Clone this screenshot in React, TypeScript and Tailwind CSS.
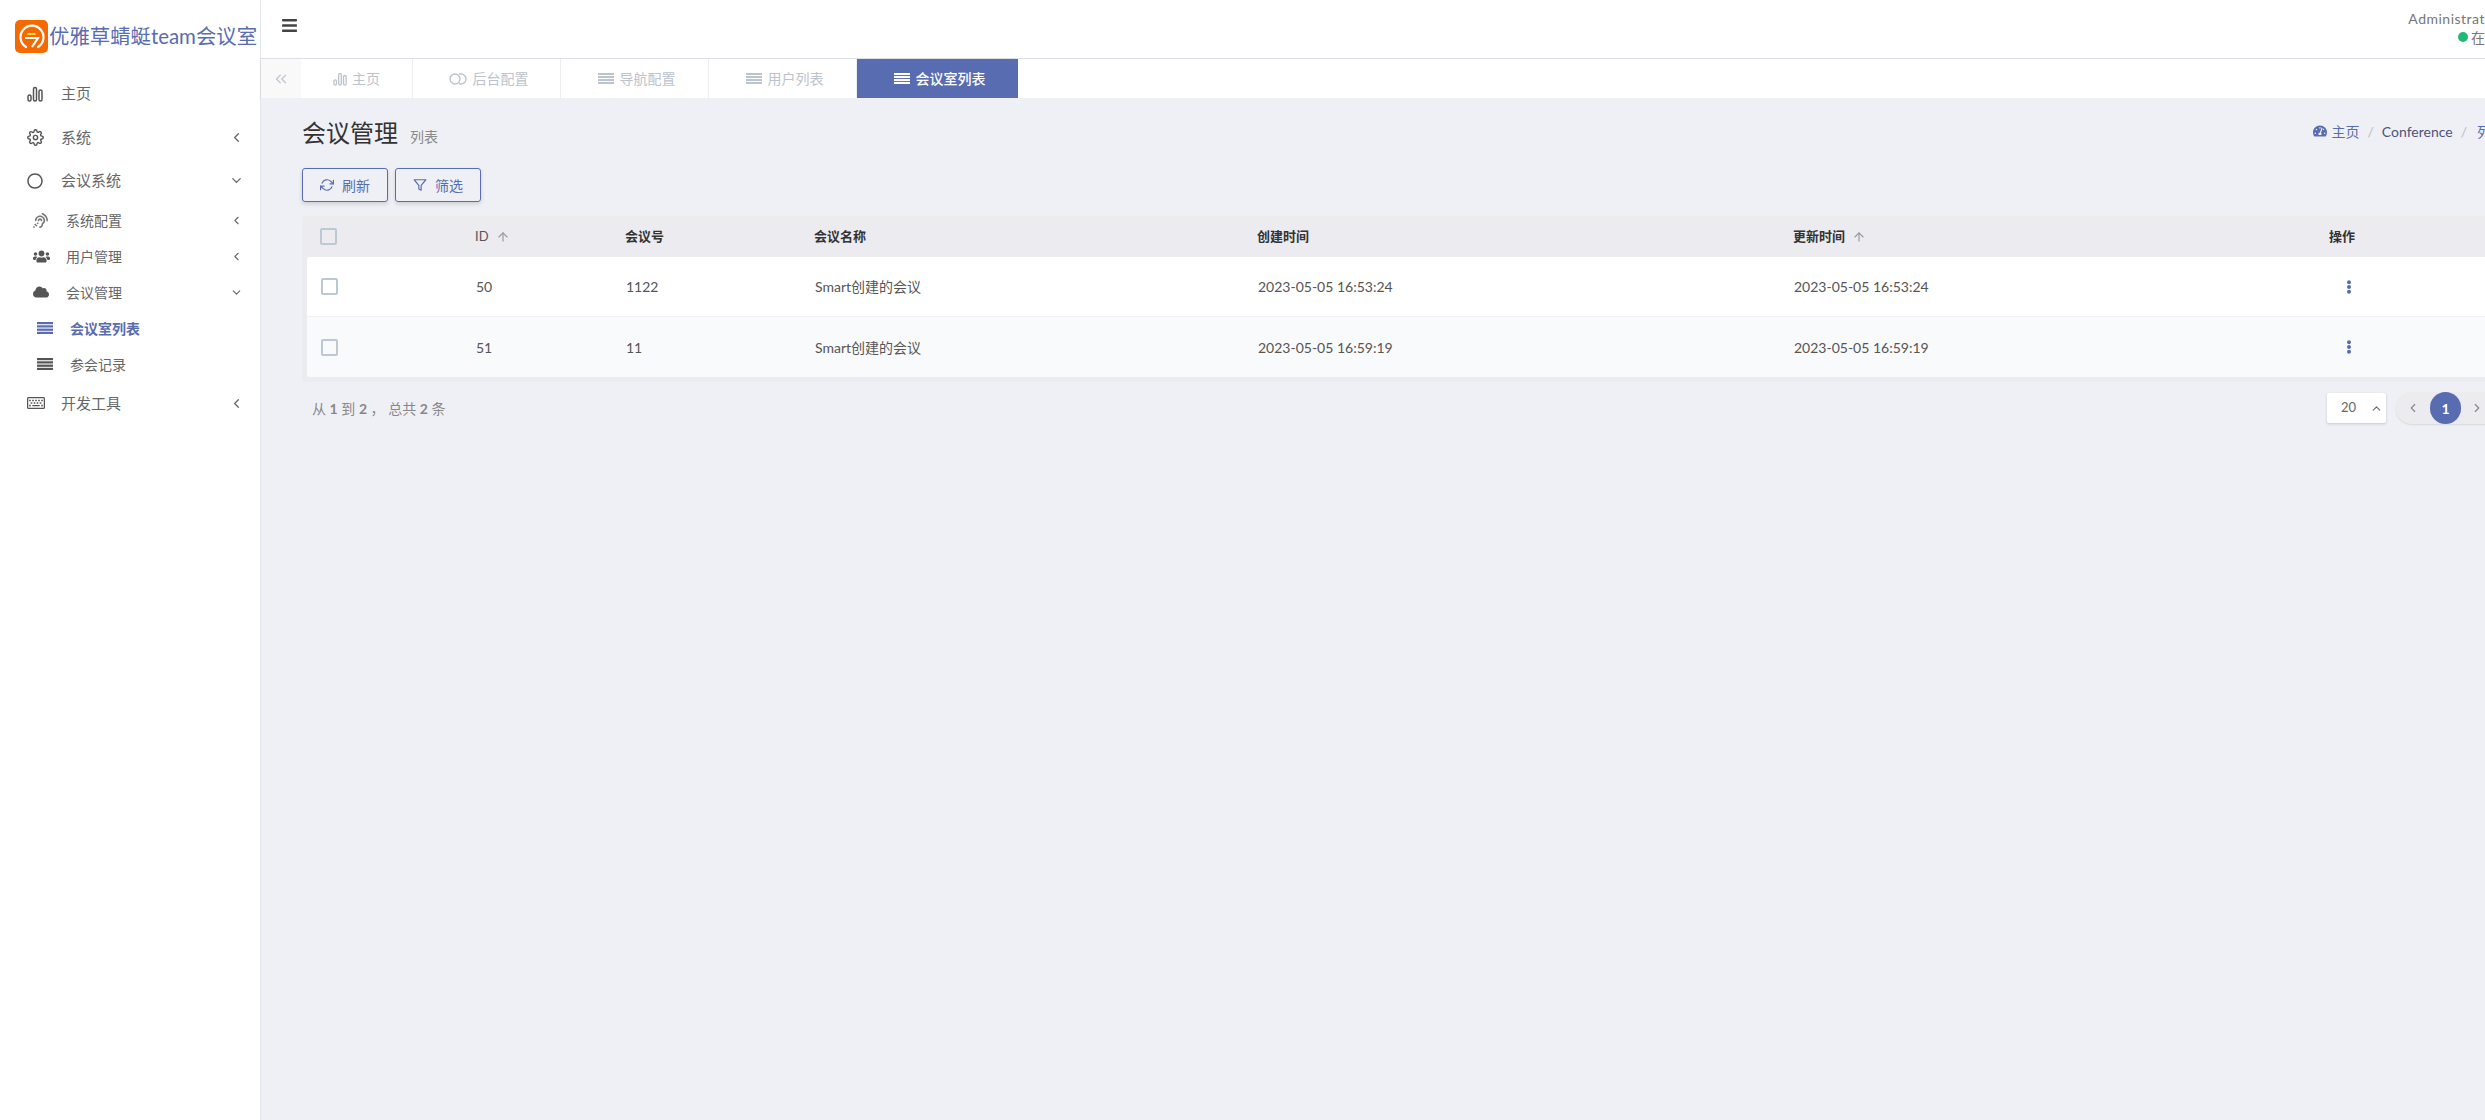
import {
  FaAssistiveListeningSystems,
  FaBars,
  FaCloud,
  FaEllipsisV,
  FaRegCircle,
  FaRegKeyboard,
  FaTachometerAlt,
  FaUsers,
} from "react-icons/fa";
import {
  FiArrowUp,
  FiChevronDown,
  FiChevronLeft,
  FiChevronRight,
  FiChevronUp,
  FiChevronsLeft,
  FiFilter,
  FiRefreshCw,
  FiSettings,
} from "react-icons/fi";

const FONT = "font-['Lato','Noto_Sans_CJK_SC',sans-serif]";

const BarsIcon = ({ className }: { className?: string }) => (
  <svg viewBox="0 0 16 16" fill="none" stroke="currentColor" strokeWidth="1.5" className={className}>
    <rect x="1" y="9" width="3" height="6" rx="1.5" />
    <rect x="6.5" y="1.5" width="3" height="13.5" rx="1.5" />
    <rect x="12" y="4" width="3" height="11" rx="1.5" />
  </svg>
);

const LinkIcon = ({ className }: { className?: string }) => (
  <svg viewBox="0 0 18 12" fill="none" stroke="currentColor" strokeWidth="1.4" className={className}>
    <circle cx="6" cy="6" r="5" />
    <path d="M10 1h2a5 5 0 0 1 0 10h-2" />
  </svg>
);

const ListIcon = ({ className }: { className?: string }) => (
  <svg viewBox="0 0 15 12" fill="currentColor" preserveAspectRatio="none" className={className}>
    <rect y="0" width="15" height="2.2" />
    <rect y="3.3" width="15" height="2.2" />
    <rect y="6.6" width="15" height="2.2" />
    <rect y="9.8" width="15" height="2.2" />
  </svg>
);

const Logo = () => (
  <svg viewBox="0 0 33 33" className="h-[33px] w-[33px] shrink-0">
    <rect width="33" height="33" rx="5" fill="#f56a00" />
    <path d="M11 27a11.5 11.5 0 1 1 12 0" fill="none" stroke="#fff" strokeWidth="2.2" strokeLinecap="round" />
    <rect x="12.5" y="13" width="8" height="2" fill="#ffd84a" />
    <path d="M10 18h13l-6 9" fill="none" stroke="#fff" strokeWidth="2.2" />
  </svg>
);

const MainItem = ({
  icon,
  label,
  arrow,
  className,
}: {
  icon: React.ReactNode;
  label: string;
  arrow?: "left" | "down";
  className: string;
}) => (
  <div className={`flex items-center pl-[27px] pr-[16px] text-[15px] text-[#666] ${className}`}>
    <span className="flex w-[34px] shrink-0 items-center text-[#555]">{icon}</span>
    <span className="flex-1">{label}</span>
    {arrow === "left" && <FiChevronLeft size={15} />}
    {arrow === "down" && <FiChevronDown size={15} />}
  </div>
);

const SubItem = ({
  icon,
  label,
  arrow,
}: {
  icon: React.ReactNode;
  label: string;
  arrow: "left" | "down";
}) => (
  <div className="flex h-[36px] items-center pl-[33px] pr-[17px] text-[14px] text-[#666]">
    <span className="flex w-[33px] shrink-0 items-center text-[#555]">{icon}</span>
    <span className="flex-1">{label}</span>
    {arrow === "left" ? <FiChevronLeft size={13} /> : <FiChevronDown size={13} />}
  </div>
);

const LeafItem = ({ label, active }: { label: string; active?: boolean }) => (
  <div
    className={`flex h-[36px] items-center pl-[37px] text-[14px] ${
      active ? "font-bold text-[#586cb1]" : "text-[#666]"
    }`}
  >
    <span className={`flex w-[33px] shrink-0 items-center ${active ? "" : "text-[#555]"}`}>
      <ListIcon className="h-[12px] w-[16px]" />
    </span>
    {label}
  </div>
);

const Sidebar = () => (
  <aside className="flex w-[261px] shrink-0 flex-col border-r border-[#e4e5ea] bg-white">
    <div className="flex h-[72px] items-center pl-[15px]">
      <Logo />
      <span className="ml-px whitespace-nowrap text-[20.4px] leading-none text-[#586cb1]">优雅草蜻蜓team会议室</span>
    </div>
    <MainItem icon={<BarsIcon className="h-4 w-4" />} label="主页" className="h-[43px]" />
    <MainItem icon={<FiSettings size={17} />} label="系统" arrow="left" className="h-[44px]" />
    <MainItem icon={<FaRegCircle size={16} />} label="会议系统" arrow="down" className="h-[43px]" />
    <SubItem icon={<FaAssistiveListeningSystems size={15} className="text-[#777]" />} label="系统配置" arrow="left" />
    <SubItem icon={<FaUsers size={17} />} label="用户管理" arrow="left" />
    <SubItem icon={<FaCloud size={16} />} label="会议管理" arrow="down" />
    <LeafItem label="会议室列表" active />
    <LeafItem label="参会记录" />
    <MainItem icon={<FaRegKeyboard size={18} />} label="开发工具" arrow="left" className="h-[42px]" />
  </aside>
);

const TabItem = ({ icon, label, active }: { icon: React.ReactNode; label: string; active?: boolean }) => (
  <div
    className={`flex h-full items-center justify-center gap-[6px] pl-[4px] text-[14px] ${
      active ? "w-[161px] bg-[#586cb1] font-medium text-white" : "w-[148px] border-r border-[#eceef2] text-[#bcc3cd]"
    }`}
  >
    {icon}
    {label}
  </div>
);

const Tabs = () => (
  <div className="flex h-[39px] shrink-0 bg-white shadow-[0_1px_2px_rgba(0,0,0,0.12)]">
    <div className="flex w-[40px] items-center justify-center bg-[#f9f9f9] text-[#c3c8d0]">
      <FiChevronsLeft size={18} />
    </div>
    <div className="flex h-full w-[112px] items-center justify-center gap-[5px] border-r border-[#eceef2] text-[14px] text-[#bcc3cd]">
      <BarsIcon className="h-[14px] w-[14px]" />
      主页
    </div>
    <TabItem icon={<LinkIcon className="h-[12px] w-[18px]" />} label="后台配置" />
    <TabItem icon={<ListIcon className="h-[11px] w-[16px]" />} label="导航配置" />
    <TabItem icon={<ListIcon className="h-[11px] w-[16px]" />} label="用户列表" />
    <TabItem icon={<ListIcon className="h-[11px] w-[16px]" />} label="会议室列表" active />
  </div>
);

const ToolButton = ({ icon, label, className }: { icon: React.ReactNode; label: string; className: string }) => (
  <div
    className={`flex h-[34px] items-center justify-center gap-[8px] rounded-[3px] border border-[#586cb1] text-[14px] text-[#586cb1] shadow-[0_2px_4px_rgba(0,0,0,0.14)] ${className}`}
  >
    {icon}
    {label}
  </div>
);

const ROW_GRID = "grid grid-cols-[168px_150px_189px_443px_536px_536px_1fr] items-center";

const Checkbox = () => <span className="block h-[17px] w-[17px] rounded-[2px] border-2 border-[#bcc8d4]" />;

const rows = [
  { id: 50, no: "1122", time: "2023-05-05 16:53:24", h: "h-[60px] border-b border-[#eef0f3] bg-white rounded-t-[3px]" },
  { id: 51, no: "11", time: "2023-05-05 16:59:19", h: "h-[60px] bg-[#f9fafc] rounded-b-[3px]" },
];

const ConferenceTable = () => (
  <div className="mt-[14px] rounded-[3px] bg-[#ecebef] px-[5px] pb-[5px]">
    <div className={`${ROW_GRID} h-[41px] text-[13px] text-[#333]`}>
      <div className="pl-[13px]">
        <Checkbox />
      </div>
      <div className="flex items-center gap-[7px] text-[#555]">
        ID <FiArrowUp size={14} className="text-[#999]" />
      </div>
      <div className="font-bold">会议号</div>
      <div className="font-bold">会议名称</div>
      <div className="font-bold">创建时间</div>
      <div className="flex items-center gap-[7px] font-bold">
        更新时间 <FiArrowUp size={14} className="font-normal text-[#999]" />
      </div>
      <div className="font-bold">操作</div>
    </div>
    {rows.map((r) => (
      <div key={r.id} className={`${ROW_GRID} ${r.h} text-[14px] text-[#555]`}>
        <div className="pl-[14px]">
          <Checkbox />
        </div>
        <div className="pl-px">{r.id}</div>
        <div className="pl-px">{r.no}</div>
        <div className="pl-px">Smart创建的会议</div>
        <div className="pl-px">{r.time}</div>
        <div className="pl-px">{r.time}</div>
        <div className="pl-[13px] text-[#586cb1]">
          <FaEllipsisV size={14} />
        </div>
      </div>
    ))}
  </div>
);

const TableFooter = () => (
  <div className="mt-[10px] flex items-center justify-between">
    <div className="pl-[10px] text-[14px] text-[#888]">
      从 <b>1</b> 到 <b>2</b> ， 总共 <b>2</b> 条
    </div>
    <div className="flex items-center gap-[10px]">
      <div className="flex h-[30px] w-[59px] items-center justify-between rounded-[2px] bg-white pl-[14px] pr-[3px] text-[13px] text-[#666] shadow-[0_1px_3px_rgba(0,0,0,0.18)]">
        20 <FiChevronUp size={13} />
      </div>
      <div className="flex h-[32px] w-[161px] items-center rounded-full bg-[#ececf0] pl-[10px] text-[#888] shadow-[0_1px_2px_rgba(0,0,0,0.1)]">
        <FiChevronLeft size={14} />
        <span className="ml-[10px] flex h-[32px] w-[31px] items-center justify-center rounded-full bg-[#586cb1] text-[14px] font-bold text-white">
          1
        </span>
        <FiChevronRight size={14} className="ml-[9px]" />
      </div>
    </div>
  </div>
);

const Content = () => (
  <main className="flex-1 bg-[#eff0f5] pl-[41px] pr-[3px]">
    <div className="flex h-[70px] items-center justify-between">
      <div className="flex items-baseline gap-[12px]">
        <h1 className="text-[24px] font-normal text-[#333]">会议管理</h1>
        <span className="text-[14px] text-[#8a8a8a]">列表</span>
      </div>
      <div className="mr-[52px] -mt-[4px] flex items-center text-[14px] text-[#586cb1]">
        <FaTachometerAlt size={14} className="mr-[4px]" />
        主页
        <span className="mx-[8px] text-[#bbb]">/</span>
        <span className="text-[#4e5378]">Conference</span>
        <span className="mx-[8px] text-[#bbb]">/</span>
        <span className="ml-[2px]">列表</span>
      </div>
    </div>
    <div className="flex gap-[7px]">
      <ToolButton icon={<FiRefreshCw size={14} />} label="刷新" className="w-[86px]" />
      <ToolButton icon={<FiFilter size={14} />} label="筛选" className="w-[86px]" />
    </div>
    <ConferenceTable />
    <TableFooter />
  </main>
);

export default function App() {
  return (
    <div className={`h-[1120px] w-[2485px] overflow-hidden ${FONT}`}>
      <div className="flex h-full w-[2560px]">
        <Sidebar />
        <div className="flex min-w-0 flex-1 flex-col">
          <header className="flex h-[59px] shrink-0 items-center justify-between border-b border-[#e0e1e6] bg-white pl-[20px] pr-[61px]">
            <FaBars size={17} className="-mt-[8px] text-[#444]" />
            <div className="-mt-[3px] flex flex-col items-end text-[14px] leading-[19px] text-[#777]">
              <span className="tracking-[0.5px]">Administrator</span>
              <span className="flex items-center gap-[3px]">
                <span className="h-[10px] w-[10px] rounded-full bg-[#21b978]" />
                在线
              </span>
            </div>
          </header>
          <Tabs />
          <Content />
        </div>
      </div>
    </div>
  );
}
